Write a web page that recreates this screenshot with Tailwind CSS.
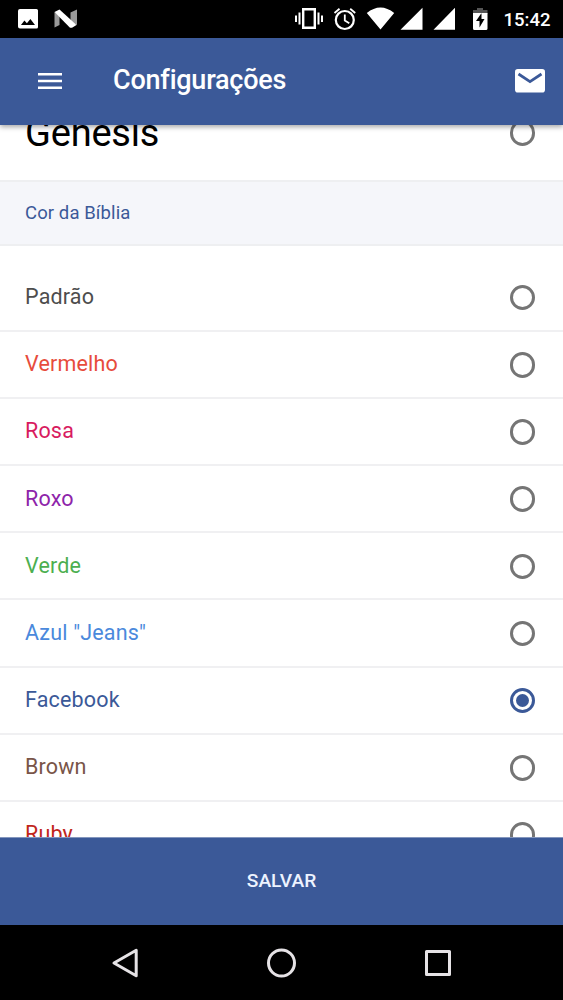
<!DOCTYPE html>
<html lang="pt-BR">
<head>
<meta charset="utf-8">
<title>Configurações</title>
<script src="https://cdn.jsdelivr.net/npm/@tailwindcss/browser@4"></script>
</head>
<body class="flex h-[1000px] w-[563px] flex-col overflow-hidden bg-white font-['Roboto',sans-serif]">
<div class="flex h-[37.5px] shrink-0 bg-black">
<svg class="h-[37px] w-[563px]" viewBox="0 0 563 37" fill="#fff">
<path fill-rule="evenodd" d="M20 9h16.500q1.500 0 1.500 1.500v16.500q0 1.500-1.500 1.500h-16.500q-2 0-2-2v-15.500q0-2 2-2zM21 25h14l-4.600-6-3.500 4.300-2.500-2.800z"/>
<path fill="#999" d="M54.500 12v15.500l5-2.500v-9zM77 9.500v15.500l-6.500-2.500v-10z"/>
<path d="M54.500 12l5-2.500 17 15.500-4.500 2.700h-2z"/>
<path fill="none" stroke="#fff" stroke-width="2.400" d="M303.200 9.200h11.600v18.600h-11.600z"/>
<path d="M298.500 12.500h2v12h-2zM295 15.500h2v6.500h-2zM317.500 12.500h2v12h-2zM321 15.500h2v6.500h-2z"/>
<g fill="none" stroke="#fff" stroke-width="2.200"><circle cx="344.800" cy="20" r="9"/><path stroke-width="1.800" d="M344.800 14.500v6l4.500 2.800M334.500 13l5-4.200M355.200 13l-5-4.200"/></g>
<path d="M366.800 13q13.700-11 27.400 0l-13.700 16.600zM400.500 29.700l22-22v22zM433.500 29.700l21.500-22v22z"/>
<path fill="#555" d="M477 8h6v2h4.500v4h-14.500v-4h4z"/>
<path fill-rule="evenodd" d="M473 13h14.500v15.500q0 1.500-1.500 1.500h-11.500q-1.500 0-1.500-1.500zM481.500 13l-5.500 8h3.500v6.500l5-8.500h-3z"/>
<text x="503.500" y="26" font-size="19" font-weight="500" textLength="47" lengthAdjust="spacingAndGlyphs">15:42</text>
</svg>
</div>
<header class="z-10 flex h-[87.500px] shrink-0 items-center bg-[#3b5998] pr-[18px] pl-[38px] text-white shadow-[0_2px_5px_rgba(0,0,0,0.35)]">
<svg class="-mt-px h-[18px] w-6" viewBox="0 0 24 18" fill="#fff"><path d="M0 1h24v2.600H0zM0 7.700h24v2.600H0zM0 14.400h24v2.600H0z"/></svg>
<h1 class="-mt-[3px] ml-[51px] text-[27px] leading-8 font-medium tracking-[-0.220px]">Configurações</h1>
<svg class="ml-auto h-6 w-[30px]" viewBox="0 0 30 24"><rect width="30" height="23.500" rx="2.800" fill="#fff"/><path d="M3.500 5L15 12.600 26.500 5" fill="none" stroke="#3b5998" stroke-width="2.700"/></svg>
</header>
<main class="flex min-h-0 flex-1 flex-col overflow-hidden text-[21.500px] tracking-[0.180px]">
<div class="-mt-10 flex h-[95px] shrink-0 items-center justify-between pr-[28px] pl-[25px]"><span class="pt-0.5 text-[38px] tracking-[-0.200px] text-black">Genesis</span><i class="mt-[1px] size-[25.500px] rounded-full border-3 border-[#757575]"></i></div>
<div class="flex h-[66px] shrink-0 items-center border-y-2 border-[#eeeff1] bg-[#f5f6fa] pt-px pl-[25px] text-[18.500px] tracking-[0.100px] text-[#3b5998]">Cor da Bíblia</div>
<div class="h-[18.500px] shrink-0"></div>
<div class="flex h-[67.200px] shrink-0 items-center justify-between border-b-2 border-[#f0f0f2] pr-[28px] pl-[25px] text-[#4d4d4d]"><span>Padrão</span><i class="mt-[1px] size-[25.500px] rounded-full border-3 border-[#757575]"></i></div>
<div class="flex h-[67.200px] shrink-0 items-center justify-between border-b-2 border-[#f0f0f2] pr-[28px] pl-[25px] text-[#e74c3c]"><span>Vermelho</span><i class="mt-[1px] size-[25.500px] rounded-full border-3 border-[#757575]"></i></div>
<div class="flex h-[67.200px] shrink-0 items-center justify-between border-b-2 border-[#f0f0f2] pr-[28px] pl-[25px] text-[#d81b60]"><span>Rosa</span><i class="mt-[1px] size-[25.500px] rounded-full border-3 border-[#757575]"></i></div>
<div class="flex h-[67.200px] shrink-0 items-center justify-between border-b-2 border-[#f0f0f2] pr-[28px] pl-[25px] text-[#8e24aa]"><span>Roxo</span><i class="mt-[1px] size-[25.500px] rounded-full border-3 border-[#757575]"></i></div>
<div class="flex h-[67.200px] shrink-0 items-center justify-between border-b-2 border-[#f0f0f2] pr-[28px] pl-[25px] text-[#4caf50]"><span>Verde</span><i class="mt-[1px] size-[25.500px] rounded-full border-3 border-[#757575]"></i></div>
<div class="flex h-[67.200px] shrink-0 items-center justify-between border-b-2 border-[#f0f0f2] pr-[28px] pl-[25px] text-[#4a89dc]"><span>Azul "Jeans"</span><i class="mt-[1px] size-[25.500px] rounded-full border-3 border-[#757575]"></i></div>
<div class="flex h-[67.200px] shrink-0 items-center justify-between border-b-2 border-[#f0f0f2] pr-[28px] pl-[25px] text-[#3b5998]"><span>Facebook</span><i class="mt-[1px] flex size-[25.500px] items-center justify-center rounded-full border-3 border-[#3b5998]"><b class="size-[13px] rounded-full bg-[#3b5998]"></b></i></div>
<div class="flex h-[67.200px] shrink-0 items-center justify-between border-b-2 border-[#f0f0f2] pr-[28px] pl-[25px] text-[#795548]"><span>Brown</span><i class="mt-[1px] size-[25.500px] rounded-full border-3 border-[#757575]"></i></div>
<div class="flex h-[67.200px] shrink-0 items-center justify-between border-b-2 border-[#f0f0f2] pr-[28px] pl-[25px] text-[#c0261c]"><span>Ruby</span><i class="mt-[1px] size-[25.500px] rounded-full border-3 border-[#757575]"></i></div>
</main>
<button class="z-10 flex h-[88px] shrink-0 items-center justify-center border-t border-[#8396bd] bg-[#3b5998] text-[19.200px] font-medium text-[#edf3ff]">SALVAR</button>
<nav class="flex h-[75px] shrink-0 items-center justify-between bg-black px-[110px]">
<svg class="size-[30px]" viewBox="0 0 30 30" fill="none" stroke="#e6e3e6" stroke-width="3" stroke-linejoin="round"><path d="M4 15L26.200 2.300v25.400z"/></svg>
<svg class="size-[30px]" viewBox="0 0 30 30" fill="none" stroke="#e6e3e6" stroke-width="3"><circle cx="14.500" cy="15" r="13"/></svg>
<svg class="size-[30px]" viewBox="0 0 30 30" fill="none" stroke="#e6e3e6" stroke-width="3" stroke-linejoin="round"><path d="M3.500 3.500h23v23h-23z"/></svg>
</nav>
</body>
</html>
